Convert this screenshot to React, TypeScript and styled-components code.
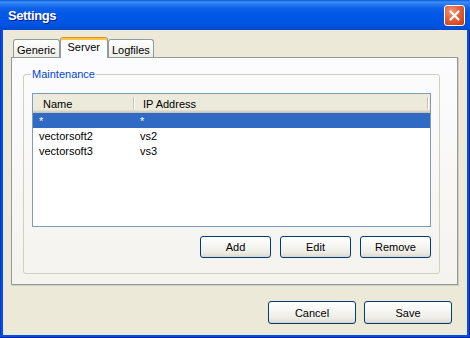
import React from "react";
import styled, { createGlobalStyle } from "styled-components";

const GlobalStyle = createGlobalStyle`
  html, body {
    margin: 0;
    padding: 0;
    background: #ffffff;
  }
  body {
    font-family: "Liberation Sans", Arial, sans-serif;
    font-size: 11px;
    color: #000000;
  }
`;

const servers = [
	{ name: "*", address: "*" },
	{ name: "vectorsoft2", address: "vs2" },
	{ name: "vectorsoft3", address: "vs3" },
];

function App() {
	return (
		<>
			<GlobalStyle />
			<Window>
				<TitleBar>
					<Title>Settings</Title>
					<CloseButton aria-label="Close">
						<svg width="21" height="21" viewBox="0 0 21 21">
							<path d="M6.5 6.5l8 8M14.5 6.5l-8 8" stroke="#ffffff" strokeWidth="2.2" strokeLinecap="round" />
						</svg>
					</CloseButton>
				</TitleBar>
				<Client>
					<TabStrip>
						<Tab>Generic</Tab>
						<Tab $active>Server</Tab>
						<Tab>Logfiles</Tab>
					</TabStrip>
					<TabPanel>
						<GroupBox>
							<Legend>Maintenance</Legend>
							<ListView>
								<Header>
									<HeaderCell $width={100} $indent={10}>Name</HeaderCell>
									<HeaderDivider />
									<HeaderCell $width={292} $indent={8}>IP Address</HeaderCell>
									<HeaderDivider />
								</Header>
								{servers.map((s, i) => (
									<Row key={s.name} $selected={i === 0}>
										<Cell $width={101}>{s.name}</Cell>
										<Cell>{s.address}</Cell>
									</Row>
								))}
							</ListView>
							<ButtonRow>
								<Button $width={71} $height={22}>Add</Button>
								<Button $width={71} $height={22}>Edit</Button>
								<Button $width={71} $height={22}>Remove</Button>
							</ButtonRow>
						</GroupBox>
					</TabPanel>
					<DialogButtons>
						<Button $width={88} $height={23}>Cancel</Button>
						<Button $width={88} $height={23}>Save</Button>
					</DialogButtons>
				</Client>
			</Window>
		</>
	);
}

export default App;

const Window = styled.div`
	width: 470px;
	height: 338px;
	display: flex;
	flex-direction: column;
	background: #0053e1;
	box-shadow: inset 1px 0 0 #0831d9, inset -1px 0 0 #001ea0, inset 0 -1px 0 #001ea0;
`;

const TitleBar = styled.div`
	height: 30px;
	flex: none;
	display: flex;
	align-items: center;
	justify-content: space-between;
	padding: 0 5px 0 8px;
	box-sizing: border-box;
	background: linear-gradient(
		to bottom,
		#0a5ad6 0px,
		#3d8ef7 2px,
		#2a7cf3 4px,
		#0e62e8 8px,
		#0058e6 14px,
		#0055e3 24px,
		#0049d0 30px
	);
`;

const Title = styled.div`
	color: #ffffff;
	font-weight: bold;
	font-size: 13px;
	letter-spacing: -0.4px;
	text-shadow: 1px 1px 0 #0a1d8c;
	padding-top: 1px;
`;

const CloseButton = styled.button`
	width: 21px;
	height: 21px;
	padding: 0;
	border: 1px solid #ffffff;
	border-radius: 3px;
	background: radial-gradient(circle at 35% 30%, #f09a7d 0%, #e2603b 45%, #d2461b 80%, #c13a12 100%);
	display: flex;
	align-items: center;
	justify-content: center;

	svg {
		display: block;
		margin: -1px;
	}
`;

const Client = styled.div`
	flex: 1;
	margin: 0 3px 3px 3px;
	background: #ece9d8;
	display: flex;
	flex-direction: column;
	padding: 7px 9px 11px 8px;
	box-sizing: border-box;
`;

const TabStrip = styled.div`
	display: flex;
	align-items: flex-end;
	height: 20px;
	padding-left: 2px;
	flex: none;
`;

interface ITab {
	$active?: boolean;
}

const Tab = styled.div<ITab>`
	position: relative;
	z-index: ${(p) => (p.$active ? 1 : 0)};
	box-sizing: border-box;
	height: ${(p) => (p.$active ? "21px" : "18px")};
	margin-bottom: ${(p) => (p.$active ? "-1px" : "0")};
	padding: ${(p) => (p.$active ? "2px 7px 0" : "3px 3px 0")};
	line-height: 15px;
	border: 1px solid #919b9c;
	border-bottom: none;
	border-top-color: ${(p) => (p.$active ? "#e68b2c" : "#919b9c")};
	border-radius: 3px 3px 0 0;
	background: ${(p) => (p.$active ? "#fcfcfe" : "linear-gradient(to bottom, #ffffff, #f3f2ec 70%, #ecebe5)")};
	box-shadow: ${(p) => (p.$active ? "inset 0 2px 0 #ffc83c" : "none")};
	white-space: nowrap;
`;

const TabPanel = styled.div`
	flex: 1;
	display: flex;
	flex-direction: column;
	border: 1px solid #919b9c;
	background: linear-gradient(to bottom, #fcfcfe, #f4f3ee);
	box-shadow: 1px 1px 0 #d0cebf;
	min-height: 0;
`;

const GroupBox = styled.fieldset`
	flex: 1;
	display: flex;
	flex-direction: column;
	margin: 10px 17px 10px 11px;
	padding: 0 8px 15px 8px;
	border: 1px solid #d0d0bf;
	border-radius: 3px;
	min-width: 0;
	min-height: 0;
`;

const Legend = styled.legend`
	padding: 0 1px;
	margin-left: -1px;
	color: #0046d5;
	line-height: 13px;
`;

const ListView = styled.div`
	flex: 1;
	margin-top: 12px;
	border: 1px solid #7f9db9;
	background: #ffffff;
	overflow: hidden;
`;

const Header = styled.div`
	display: flex;
	align-items: center;
	height: 19px;
	background: linear-gradient(
		to bottom,
		#ebeadb 0,
		#ebeadb 16px,
		#e2decd 16px,
		#e2decd 17px,
		#d6d2c2 17px,
		#d6d2c2 18px,
		#cbc7b8 18px
	);
`;

interface ICell {
	$width?: number;
	$indent?: number;
}

const HeaderCell = styled.div<ICell>`
	width: ${(p) => p.$width}px;
	flex: none;
	box-sizing: border-box;
	padding-left: ${(p) => p.$indent}px;
	padding-top: 1px;
	line-height: 18px;
	height: 19px;
	white-space: nowrap;
`;

const HeaderDivider = styled.div`
	flex: none;
	width: 0;
	height: 12px;
	margin-top: -2px;
	border-left: 1px solid #c7c5b2;
	border-right: 1px solid #ffffff;
`;

interface IRow {
	$selected?: boolean;
}

const Row = styled.div<IRow>`
	display: flex;
	height: 15px;
	line-height: 15px;
	background: ${(p) => (p.$selected ? "#316ac5" : "transparent")};
	color: ${(p) => (p.$selected ? "#ffffff" : "#000000")};
`;

const Cell = styled.div<ICell>`
	width: ${(p) => (p.$width ? `${p.$width}px` : "auto")};
	flex: ${(p) => (p.$width ? "none" : "1")};
	box-sizing: border-box;
	padding-left: 6px;
	padding-top: 1px;
	white-space: nowrap;
`;

const ButtonRow = styled.div`
	display: flex;
	justify-content: flex-end;
	gap: 9px;
	margin-top: 9px;
`;

interface IButton {
	$width: number;
	$height: number;
}

const Button = styled.button<IButton>`
	width: ${(p) => p.$width}px;
	height: ${(p) => p.$height}px;
	padding: 0;
	border: 1px solid #003c74;
	border-radius: 3px;
	background: linear-gradient(to bottom, #ffffff 0%, #f6f6f3 40%, #eeede7 75%, #e3e1d7 92%, #d6d0c5 100%);
	font-family: "Liberation Sans", Arial, sans-serif;
	font-size: 11px;
	color: #000000;
	flex: none;
`;

const DialogButtons = styled.div`
	display: flex;
	justify-content: flex-end;
	gap: 8px;
	margin-top: 16px;
	padding-right: 6px;
	flex: none;
`;
